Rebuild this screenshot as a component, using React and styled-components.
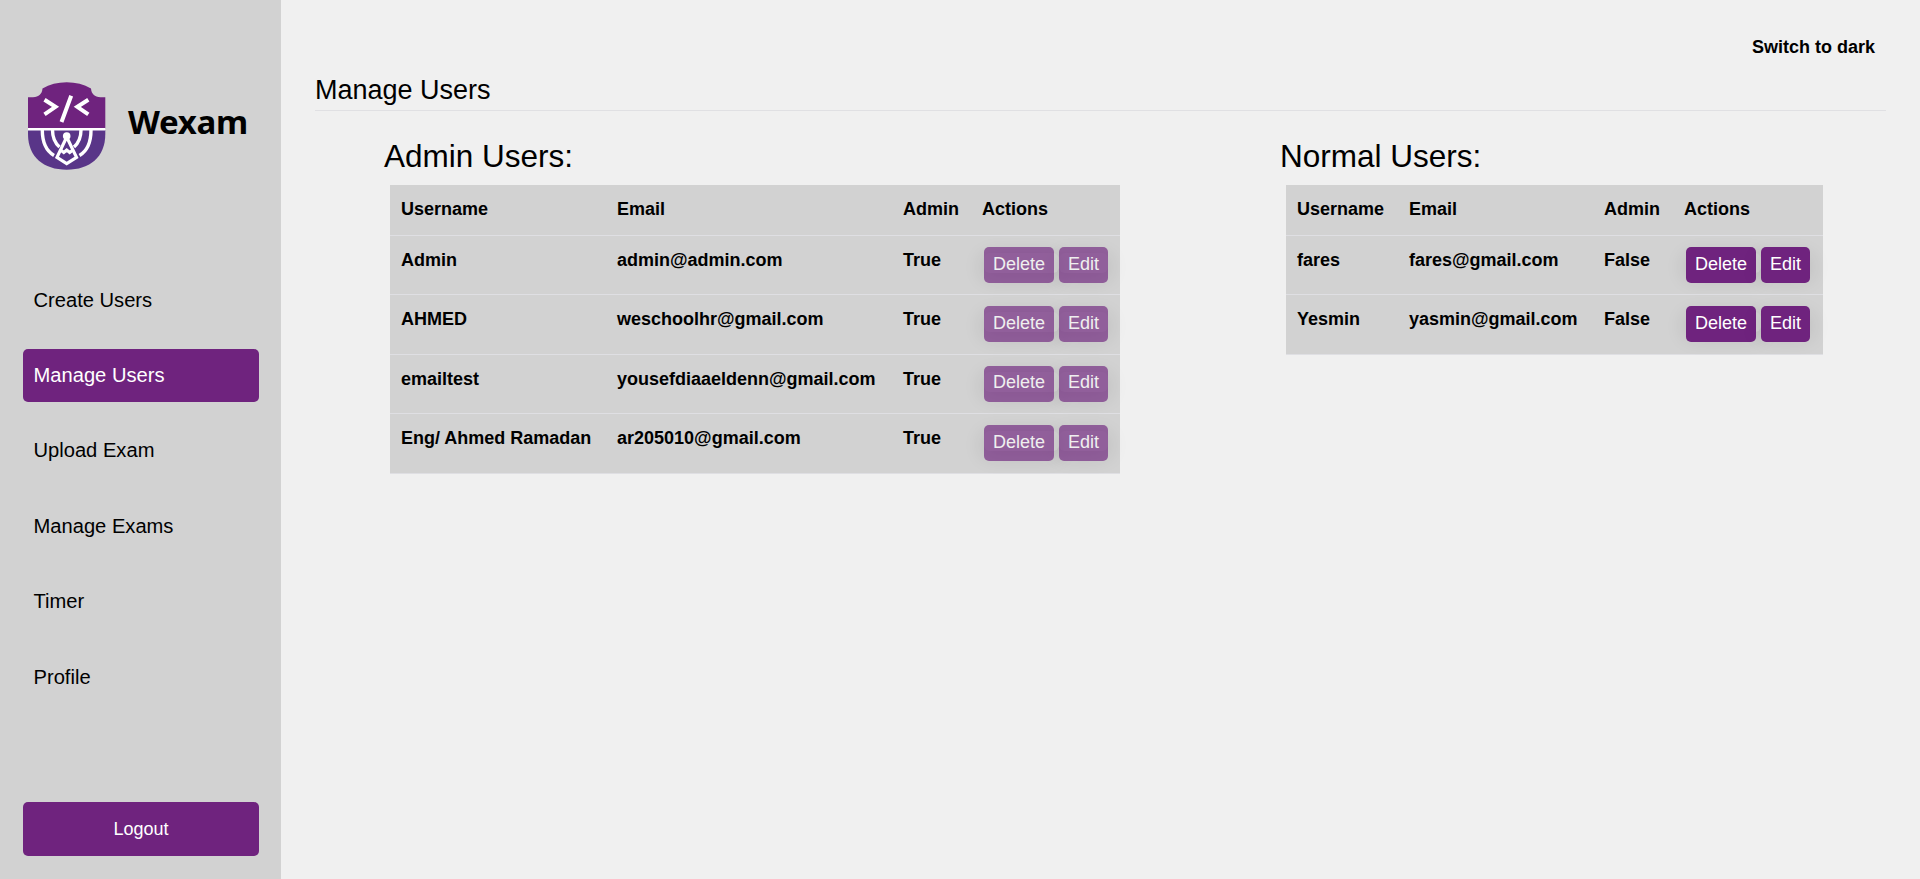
import React from "react";
import styled, { createGlobalStyle } from "styled-components";

const Global = createGlobalStyle`
  *, *::before, *::after { box-sizing: border-box; }
  body {
    margin: 0;
    background: #f0f0f0;
    color: #000;
    font: 18px/1.5 "Liberation Sans", Arial, sans-serif;
  }
`;

const Page = styled.div`
  display: flex;
  height: 879px;
  overflow: hidden;
`;

const Sidebar = styled.aside`
  flex: 0 0 281px;
  display: flex;
  flex-direction: column;
  padding: 82px 22px 23px 23px;
  background: #d2d2d2;
`;

const Brand = styled.div`
  display: flex;
  align-items: center;
  height: 88px;
  padding-left: 4px;
  gap: 21px;
`;

const BrandName = styled.span`
  font: 700 33px/40px "Noto Sans", "Open Sans", sans-serif;
  letter-spacing: -0.3px;
  padding-bottom: 8px;
`;

const Nav = styled.nav`
  display: flex;
  flex-direction: column;
  gap: 22.4px;
  margin-top: 103.6px;
`;

const NavItem = styled.a`
  height: 53px;
  padding: 0 10.5px;
  border-radius: 5px;
  font-size: 20.15px;
  line-height: 53px;
  color: ${(p) => (p.$active ? "#fff" : "#000")};
  background: ${(p) => (p.$active ? "#6f237e" : "transparent")};
`;

const Logout = styled.button`
  height: 54px;
  margin-top: auto;
  border: 0;
  border-radius: 5px;
  background: #6f237e;
  color: #fff;
  font: 18px "Liberation Sans", Arial, sans-serif;
`;

const Main = styled.main`
  flex: 1;
  display: flex;
  flex-direction: column;
  padding: 34px 34px 0;
`;

const ThemeSwitch = styled.div`
  align-self: flex-end;
  margin-right: 11px;
  font-weight: 700;
`;

const Title = styled.h1`
  margin: 8px 0 0;
  height: 42px;
  border-bottom: 1px solid #e0e0e3;
  font-size: 27px;
  font-weight: 400;
  line-height: 42px;
`;

const Tables = styled.div`
  display: flex;
  justify-content: space-between;
  margin-top: 21px;
  padding: 0 63px 0 69px;
`;

const Group = styled.section``;

const Heading = styled.h2`
  margin: 0 0 5px;
  height: 48px;
  font-size: 31.5px;
  font-weight: 400;
  line-height: 48px;
`;

const Table = styled.table`
  width: ${(p) => p.$width}px;
  margin-left: 6px;
  table-layout: fixed;
  border-collapse: separate;
  border-spacing: 0;
  background: #d2d2d2;
  font-weight: 700;
`;

const Row = styled.tr`
  height: ${(p) => p.$height}px;
`;

const Cell = styled.td`
  padding: 11px 0 0 11px;
  border-bottom: 1px solid #dfdfe3;
  text-align: left;
  vertical-align: top;
  line-height: 27px;
`;

const Actions = styled.div`
  display: flex;
  padding: 6px 0 10px 2px;
`;

const ActionLink = styled.a`
  display: flex;
  align-items: flex-start;
  height: 20px;
  padding-right: ${(p) => p.$gap}px;
  border-radius: 6px;
  box-shadow: 0 4px 20px 2px rgba(0, 0, 0, 0.11);
`;

const ActionButton = styled.button`
  width: ${(p) => p.$width}px;
  height: 36px;
  margin-top: -6px;
  padding: 0 0 2px;
  border: 0;
  border-radius: 5px;
  background: #6f237e;
  color: #fff;
  font: 18px "Liberation Sans", Arial, sans-serif;
  opacity: ${(p) => (p.disabled ? 0.65 : 1)};
`;

function Logo() {
  return (
    <svg width="80" height="88" viewBox="0 0 80 88" fill="none">
      <path d="M1 15.300H6C12 15 15 12 15.500 6.500Q26 .3 39.700 .3T64 6.500C64.500 12 67.500 15 73.500 15.300H78.300V46.500H1Z" fill="#6f237e" />
      <path d="M1 48H78.300V52C78.300 75 63 87.700 39.700 87.700S1 75 1 52Z" fill="#593588" />
      <path d="M1 47.200H78.300" stroke="#fff" strokeWidth="2.600" />
      <g stroke="#fff">
        <path d="M17.500 17.700L28.500 24.800L17.500 32.300M61.300 17.700L50.300 24.800L61.300 32.300M44.200 13.700L34.500 40" strokeWidth="4" />
        <path d="M15.300 48C15.300 60 19.500 69 27 73.500M64 48C64 60 60 69 52.500 73.500M25.500 48C25.500 56 28 61 32.500 65M54 48C54 56 51.500 61 47 65" strokeWidth="3.400" />
        <path d="M39.700 55L30 75.300L39.700 81.500L49.500 75.300Z" strokeWidth="3.200" />
        <path d="M33 67.500L36.800 70.500L39.700 68L42.700 70.500L46.500 67.500" strokeWidth="3" />
      </g>
      <circle cx="39.700" cy="54" r="3.800" fill="#fff" />
    </svg>
  );
}

function UserTable({ title, users, widths, locked }) {
  return (
    <Group>
      <Heading>{title}</Heading>
      <Table $width={widths.reduce((a, b) => a + b, 0)}>
        <colgroup>
          {widths.map((w, i) => <col key={i} width={w} />)}
        </colgroup>
        <thead>
          <Row $height={51}>
            {["Username", "Email", "Admin", "Actions"].map((h) => (
              <Cell as="th" key={h}>{h}</Cell>
            ))}
          </Row>
        </thead>
        <tbody>
          {users.map(([name, email]) => (
            <Row key={name} $height={59.4}>
              <Cell>{name}</Cell>
              <Cell>{email}</Cell>
              <Cell>{locked ? "True" : "False"}</Cell>
              <Cell>
                <Actions>
                  <ActionLink $gap={5}>
                    <ActionButton $width={70} disabled={locked}>Delete</ActionButton>
                  </ActionLink>
                  <ActionLink $gap={0}>
                    <ActionButton $width={49} disabled={locked}>Edit</ActionButton>
                  </ActionLink>
                </Actions>
              </Cell>
            </Row>
          ))}
        </tbody>
      </Table>
    </Group>
  );
}

const navItems = ["Create Users", "Manage Users", "Upload Exam", "Manage Exams", "Timer", "Profile"];

const admins = [
  ["Admin", "admin@admin.com"],
  ["AHMED", "weschoolhr@gmail.com"],
  ["emailtest", "yousefdiaaeldenn@gmail.com"],
  ["Eng/ Ahmed Ramadan", "ar205010@gmail.com"],
];

const normals = [
  ["fares", "fares@gmail.com"],
  ["Yesmin", "yasmin@gmail.com"],
];

export default function App() {
  return (
    <Page>
      <Global />
      <Sidebar>
        <Brand>
          <Logo />
          <BrandName>Wexam</BrandName>
        </Brand>
        <Nav>
          {navItems.map((item) => (
            <NavItem key={item} $active={item === "Manage Users"}>{item}</NavItem>
          ))}
        </Nav>
        <Logout>Logout</Logout>
      </Sidebar>
      <Main>
        <ThemeSwitch>Switch to dark</ThemeSwitch>
        <Title>Manage Users</Title>
        <Tables>
          <UserTable title="Admin Users:" users={admins} widths={[216, 286, 79, 149]} locked />
          <UserTable title="Normal Users:" users={normals} widths={[112, 195, 80, 150]} locked={false} />
        </Tables>
      </Main>
    </Page>
  );
}
